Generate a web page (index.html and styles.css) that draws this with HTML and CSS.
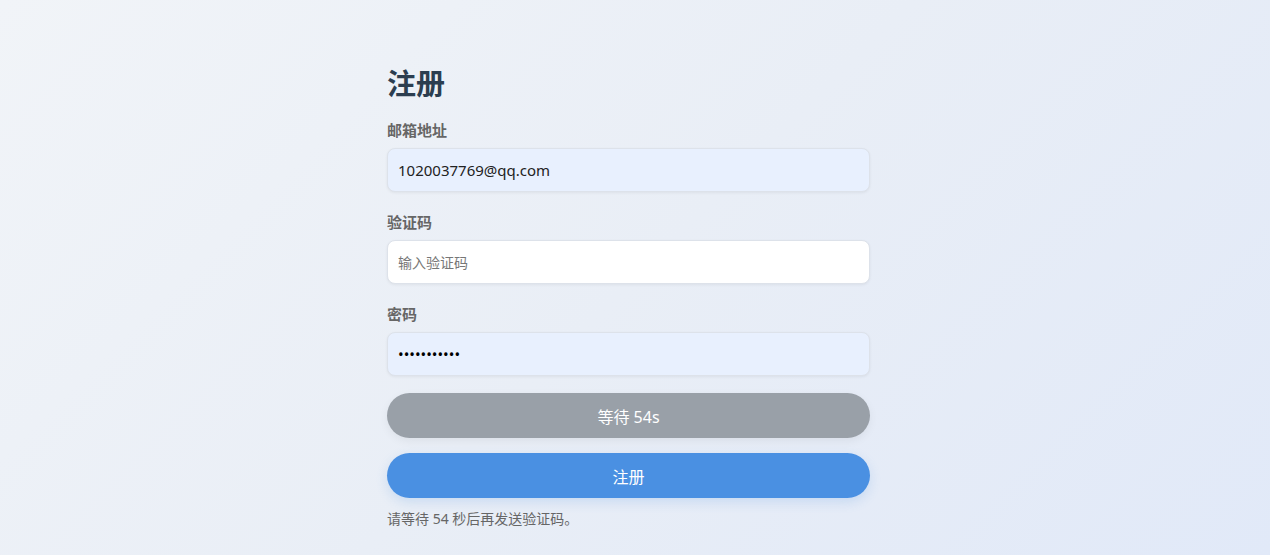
FILE: index.html
```html
<!DOCTYPE html>
<html lang="zh-CN">
<head>
    <meta charset="UTF-8">
    <meta name="viewport" content="width=device-width, initial-scale=1.0">
    <title>注册</title>
    <link rel="stylesheet" href="styles.css">
</head>
<body>
<div class="page">
    <div class="register-box">
        <h2>注册</h2>
        <div class="form-group">
            <label for="email">邮箱地址</label>
            <input type="email" id="email" class="filled" value="1020037769@qq.com">
        </div>
        <div class="form-group">
            <label for="code">验证码</label>
            <input type="text" id="code" placeholder="输入验证码">
        </div>
        <div class="form-group">
            <label for="password">密码</label>
            <input type="password" id="password" class="filled" value="12345678901">
        </div>
        <button class="btn btn-wait" disabled>等待 54s</button>
        <button class="btn btn-primary">注册</button>
        <p class="message">请等待 54 秒后再发送验证码。</p>
    </div>
</div>
</body>
</html>
```

FILE: styles.css
```css
body {
  margin: 0;
  padding: 0;
  min-height: 100vh;
  font-family: 'Noto Sans', 'Noto Sans CJK SC', sans-serif;
  background: linear-gradient(135deg, #f1f4f8 0%, #e9eef6 50%, #e1e9f8 100%);
}

.page {
  display: flex;
  justify-content: center;
  padding: 66px 13px 0 0;
}

.register-box {
  width: 483px;
}

.register-box h2 {
  font-size: 29px;
  line-height: 36px;
  color: #2c3e50;
  margin: 0 0 18px 0;
  font-weight: 700;
}

.form-group {
  margin-bottom: 20px;
}

.form-group label {
  display: block;
  font-size: 15px;
  line-height: 21px;
  font-weight: 700;
  color: #666;
  margin-bottom: 7px;
}

.form-group input {
  display: block;
  box-sizing: border-box;
  width: 100%;
  height: 44px;
  padding: 0 10px;
  font-size: 15px;
  font-family: inherit;
  color: #222;
  background: #fff;
  border: 1px solid #dde2ea;
  border-radius: 8px;
  box-shadow: 0 1px 3px rgba(0, 0, 0, 0.06);
  outline: none;
}

.form-group:last-of-type {
  margin-bottom: 17px;
}

.form-group input.filled {
  background: #e8f0fe;
}

.form-group input::placeholder {
  color: #777;
  font-size: 14px;
}

#password {
  font-size: 15px;
  color: #000;
}

.btn {
  display: block;
  width: 100%;
  height: 45px;
  border: none;
  border-radius: 23px;
  font-size: 16px;
  font-family: inherit;
  color: #fff;
  cursor: pointer;
}

.btn-wait {
  background-color: #99a0a8;
  box-shadow: 0 3px 10px rgba(0, 0, 0, 0.06);
}

.btn-primary {
  background-color: #4a90e2;
  margin-top: 15px;
  box-shadow: 0 4px 12px rgba(74, 144, 226, 0.2);
}

.message {
  font-size: 14px;
  color: #666;
  margin: 10px 0 0 0;
}
```
